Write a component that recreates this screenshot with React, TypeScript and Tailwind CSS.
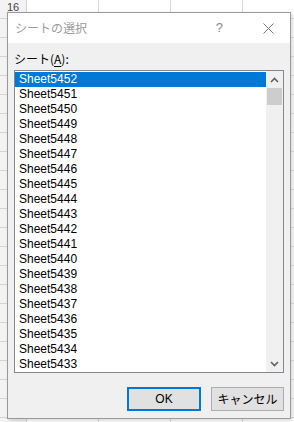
import React from 'react'

const sheets: string[] = Array.from({ length: 20 }, (_, i) => `Sheet${5452 - i}`)
const rowNums: number[] = Array.from({ length: 22 }, (_, i) => 16 + i)
const cols: number[] = [0, 1, 2, 3]

// ---- Spreadsheet behind the dialog ------------------------------------------
function SheetBackdrop() {
    return (
        <div className="flex h-full w-full">
            {/* row headers */}
            <div className="flex w-[27px] shrink-0 flex-col border-r border-[#d4d4d4] bg-[#f3f3f3]">
                {rowNums.map((n) => (
                    <div
                        key={n}
                        className="flex h-[19px] shrink-0 items-start border-b border-[#d4d4d4] pl-[7px] pt-[1px] text-[11px] leading-[12px] text-[#444]">
                        {n}
                    </div>
                ))}
            </div>
            {cols.map((c) => (
                <div key={c} className="flex w-[72px] shrink-0 flex-col border-r border-[#dadada]">
                    {rowNums.map((n) => (
                        <div key={n} className="h-[19px] shrink-0 border-b border-[#e2e2e2]" />
                    ))}
                </div>
            ))}
        </div>
    )
}

function ChevronUp() {
    return (
        <svg width="9" height="6" viewBox="0 0 9 6">
            <polyline points="1,5 4.5,1.5 8,5" fill="none" stroke="#606060" strokeWidth="1.6" />
        </svg>
    )
}

function ChevronDown() {
    return (
        <svg width="9" height="6" viewBox="0 0 9 6">
            <polyline points="1,1 4.5,4.5 8,1" fill="none" stroke="#606060" strokeWidth="1.6" />
        </svg>
    )
}

export default function App() {
    return (
        <div
            className="relative h-[422px] w-[294px] overflow-hidden bg-white"
            style={{ fontFamily: '"Liberation Sans", "Noto Sans CJK JP", sans-serif' }}>
            <SheetBackdrop />

            {/* Dialog: シートの選択 */}
            <div className="absolute left-[7px] top-[12px] flex h-[407px] w-[284px] flex-col border border-[#9a9a9a] bg-[#f0f0f0] shadow-[2px_2px_4px_rgba(0,0,0,0.15)]">
                {/* title bar */}
                <div className="flex h-[30px] shrink-0 items-center bg-white pl-[7px]">
                    <span className="text-[12px] text-[#9b9b9b]" style={{ fontFamily: '"Noto Sans CJK JP", sans-serif' }}>
                        シートの選択
                    </span>
                    <span className="ml-auto text-[13px] text-[#8a8a8a]">?</span>
                    <span className="ml-[40px] mr-[16px] flex items-center">
                        <svg width="11" height="11" viewBox="0 0 11 11">
                            <path d="M0.5 0.5 L10.5 10.5 M10.5 0.5 L0.5 10.5" stroke="#7a7a7a" strokeWidth="1" />
                        </svg>
                    </span>
                </div>

                <div className="flex flex-1 flex-col px-[6px] pb-[7px]">
                    {/* label */}
                    <div
                        className="mt-[8px] h-[15px] text-[12px] leading-[15px] text-black"
                        style={{ fontFamily: '"Noto Sans CJK JP", sans-serif' }}>
                        シート(<span className="underline underline-offset-2">A</span>):
                    </div>

                    {/* list box */}
                    <div className="mt-[4px] flex h-[303px] border border-[#828790] bg-white">
                        <div className="flex flex-1 flex-col pt-[1px]">
                            {sheets.map((s, i) => (
                                <div
                                    key={s}
                                    className={
                                        i === 0
                                            ? 'h-[15px] bg-[#0078d7] pl-[4px] text-[12px] leading-[15px] text-white'
                                            : 'h-[15px] pl-[4px] text-[12px] leading-[15px] text-black'
                                    }>
                                    {s}
                                </div>
                            ))}
                        </div>
                        {/* scrollbar */}
                        <div className="flex w-[17px] flex-col bg-[#f0f0f0]">
                            <div className="flex h-[17px] items-center justify-center">
                                <ChevronUp />
                            </div>
                            <div className="mx-[1px] h-[17px] bg-[#cdcdcd]" />
                            <div className="flex-1" />
                            <div className="flex h-[17px] items-center justify-center">
                                <ChevronDown />
                            </div>
                        </div>
                    </div>

                    {/* buttons */}
                    <div className="mt-auto flex justify-end gap-[10px]">
                        <button
                            type="button"
                            className="h-[24px] w-[74px] border-2 border-[#0078d7] bg-[#e1e1e1] text-[12px] text-black">
                            OK
                        </button>
                        <button
                            type="button"
                            className="h-[24px] w-[73px] border border-[#adadad] bg-[#e1e1e1] text-[12px] text-black"
                            style={{ fontFamily: '"Noto Sans CJK JP", sans-serif' }}>
                            キャンセル
                        </button>
                    </div>
                </div>
            </div>
        </div>
    )
}
